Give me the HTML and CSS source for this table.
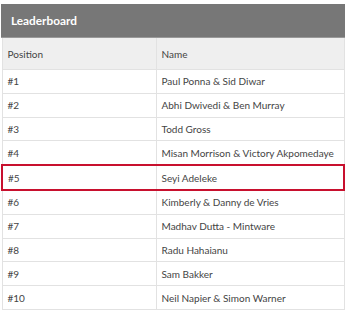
FILE: index.html
```html
<!DOCTYPE html>
<html>
<head>
<meta charset="utf-8">
<link rel="stylesheet" href="styles.css">
</head>
<body>
<div class="board">
  <div class="title">Leaderboard</div>
  <table class="tbl">
    <thead>
      <tr><th class="pos">Position</th><th>Name</th></tr>
    </thead>
    <tbody>
      <tr><td class="pos">#1</td><td>Paul Ponna &amp; Sid Diwar</td></tr>
      <tr><td class="pos">#2</td><td>Abhi Dwivedi &amp; Ben Murray</td></tr>
      <tr><td class="pos">#3</td><td>Todd Gross</td></tr>
      <tr><td class="pos">#4</td><td>Misan Morrison &amp; Victory Akpomedaye</td></tr>
      <tr class="hl"><td class="pos">#5</td><td>Seyi Adeleke</td></tr>
      <tr><td class="pos">#6</td><td>Kimberly &amp; Danny de Vries</td></tr>
      <tr><td class="pos">#7</td><td>Madhav Dutta - Mintware</td></tr>
      <tr><td class="pos">#8</td><td>Radu Hahaianu</td></tr>
      <tr><td class="pos">#9</td><td>Sam Bakker</td></tr>
      <tr><td class="pos">#10</td><td>Neil Napier &amp; Simon Warner</td></tr>
    </tbody>
  </table>
</div>
</body>
</html>
```
FILE: styles.css
```css
html, body { margin: 0; padding: 0; background: #fff; }
body { font-family: Lato, "Open Sans", sans-serif; color: #444; }
.board { padding: 4px 1px 0 1px; }
.title {
  background: #777;
  color: #fff;
  font-weight: bold;
  font-size: 11.8px;
  height: 34px;
  line-height: 34px;
  padding-left: 10px;
  border-bottom: 1px solid #999;
  box-sizing: border-box;
}
.tbl { width: 100%; border-collapse: collapse; font-size: 10px; table-layout: fixed; }
.tbl th {
  background: #efefef;
  font-weight: normal;
  text-align: left;
  height: 31px;
  padding: 0 5px;
  border: 1px solid #e2e2e2;
  border-top: none;
}
.tbl td {
  height: 22.8px;
  padding: 0 5px;
  border: 1px solid #e2e2e2;
  white-space: nowrap;
}
.tbl .pos { width: 143px; }
.tbl tr.hl td { border-top: 2px solid #c8102e; border-bottom: 2px solid #c8102e; }
.tbl tr.hl td:first-child { border-left: 2px solid #c8102e; }
.tbl tr.hl td:last-child { border-right: 2px solid #c8102e; }
```
